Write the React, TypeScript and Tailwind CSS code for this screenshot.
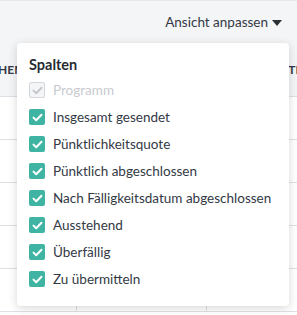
const cols = [
  { label: "Programm", disabled: true },
  { label: "Insgesamt gesendet" },
  { label: "Pünktlichkeitsquote" },
  { label: "Pünktlich abgeschlossen" },
  { label: "Nach Fälligkeitsdatum abgeschlossen" },
  { label: "Ausstehend" },
  { label: "Überfällig" },
  { label: "Zu übermitteln" },
];

function Check({ disabled }: { disabled?: boolean }) {
  return (
    <span
      className={
        "flex h-4 w-4 shrink-0 items-center justify-center rounded-[2px] " +
        (disabled ? "border border-[#d3d6da] bg-[#f4f5f6]" : "bg-[#3fb4a2]")
      }
    >
      <svg width="11" height="9" viewBox="0 0 11 9" fill="none">
        <path
          d="M1.5 4.6 L4.2 7.2 L9.5 1.8"
          stroke={disabled ? "#c4c8cd" : "#ffffff"}
          strokeWidth="2"
          strokeLinecap="round"
          strokeLinejoin="round"
        />
      </svg>
    </span>
  );
}

export default function App() {
  return (
    <div className="relative h-[315px] w-[297px] overflow-hidden bg-white font-['Lato',sans-serif] text-[13.5px] text-[#333944]">
      <div className="flex h-[44px] items-center justify-end border-t border-[#e6e8eb] bg-[#f4f5f7] pr-[15px]">
        <span className="pb-[1px]">Ansicht anpassen</span>
        <svg className="ml-[4px]" width="10" height="6" viewBox="0 0 10 6">
          <path d="M0 0 H10 L5 6 Z" fill="#2b2f36" />
        </svg>
      </div>
      <div className="flex h-[53px] items-center justify-between border-b border-[#dde1e5] bg-[#f4f5f7] text-[12px] font-bold text-[#333944]">
        <span className="-ml-[2px]">HEM</span>
        <span className="-mr-[2px]">TI</span>
      </div>
      {[0, 1, 2, 3, 4].map((i) => (
        <div key={i} className="grid h-[43px] grid-cols-[77px_130px_1fr] border-b border-[#dde1e5]">
          <div className="border-r border-[#dde1e5]" />
          <div className="border-r border-[#dde1e5]" />
          <div />
        </div>
      ))}

      <div className="absolute left-[17px] top-[43px] w-[272px] rounded-[4px] bg-white pt-[11px] pb-[13px] pl-[12px] shadow-[0_2px_10px_rgba(0,0,0,0.16)]">
        <div className="mb-[1px] text-[14.5px] font-bold text-[#262b33]">Spalten</div>
        <div className="flex flex-col">
          {cols.map((c) => (
            <div key={c.label} className="flex h-[27px] items-center gap-[8px]">
              <Check disabled={c.disabled} />
              <span className={c.disabled ? "text-[#c8cbd0]" : ""}>{c.label}</span>
            </div>
          ))}
        </div>
      </div>
    </div>
  );
}
